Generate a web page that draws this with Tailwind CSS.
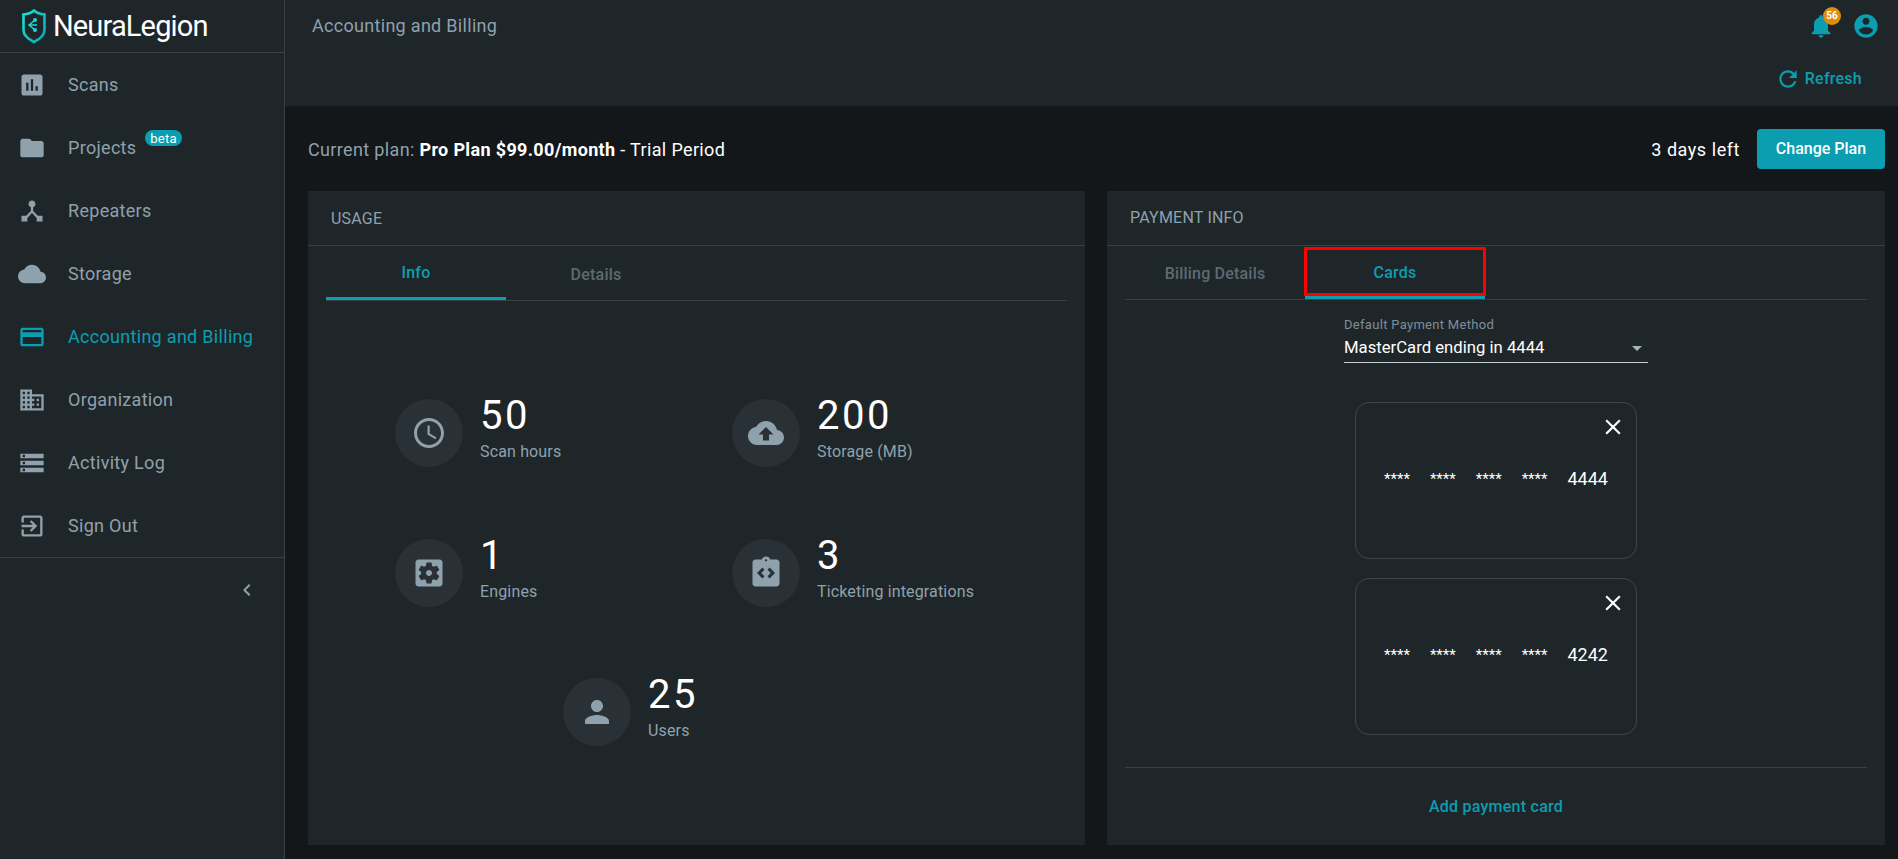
<!DOCTYPE html>
<html lang="en"><head><meta charset="utf-8"><title>Accounting and Billing</title>
<script src="https://cdn.jsdelivr.net/npm/@tailwindcss/browser@4"></script></head>
<body class="m-0 h-[859px] w-[1898px] overflow-hidden bg-[#13171a] font-['Roboto',sans-serif] text-[#8fa1ac]">
<div class="flex h-[859px]">
<aside class="h-full w-[285px] shrink-0 border-r border-[#3a4044] bg-[#1f262a]">
  <div class="flex h-[53px] items-center gap-[7px] border-b border-[#3a4044] pl-[22px]">
    <svg width="24" height="35" viewBox="0 0 24 35" fill="none"><defs><linearGradient id="lg" x1="0" y1="0" x2="1" y2="1"><stop offset="0" stop-color="#19e3d5"/><stop offset="1" stop-color="#0ba6b5"/></linearGradient></defs><path d="M1.5 5.5Q8 5 12 1.5Q16 5 22.5 5.5V21C22.5 27 17 30.5 12 33C7 30.5 1.5 27 1.5 21Z" stroke="url(#lg)" stroke-width="2.6"/><path d="M13 11 7 16l6 5M7 16h8" stroke="#19d8d0" stroke-width="1.5"/><circle cx="13" cy="11" r="2" fill="#19d8d0"/><circle cx="13" cy="21" r="2" fill="#19d8d0"/></svg>
    <span class="text-[29px] leading-none tracking-[-0.85px] text-white">NeuraLegion</span>
  </div>
  <nav>
    <a class="flex h-[63px] items-center pl-[18px] text-[18px] tracking-[0.3px]"><svg class="mr-[22px] size-7" viewBox="0 0 24 24" fill="#8fa1ac"><path d="M19 3H5c-1.1 0-2 .9-2 2v14c0 1.1.9 2 2 2h14c1.1 0 2-.9 2-2V5c0-1.1-.9-2-2-2zM9 17H7v-7h2v7zm4 0h-2V7h2v10zm4 0h-2v-4h2v4z"/></svg>Scans</a>
    <a class="relative flex h-[63px] items-center pl-[18px] text-[18px] tracking-[0.3px]"><svg class="mr-[22px] size-7" viewBox="0 0 24 24" fill="#8fa1ac"><path d="M10 4H4c-1.1 0-1.99.9-1.99 2L2 18c0 1.1.9 2 2 2h16c1.1 0 2-.9 2-2V8c0-1.1-.9-2-2-2h-8l-2-2z"/></svg>Projects<span class="absolute left-[145px] top-[14px] flex h-4 w-[37px] items-center justify-center rounded-full bg-[#0a9eb0] text-[13px] leading-none text-white">beta</span></a>
    <a class="flex h-[63px] items-center pl-[18px] text-[18px] tracking-[0.3px]"><svg class="mr-[22px] size-7" viewBox="0 0 24 24" fill="#8fa1ac"><path d="M17 16l-4-4V8.82C14.16 8.4 15 7.3 15 6c0-1.66-1.34-3-3-3S9 4.34 9 6c0 1.3.84 2.4 2 2.82V12l-4 4H3v5h5v-3.05l4-4.2 4 4.2V21h5v-5h-4z"/></svg>Repeaters</a>
    <a class="flex h-[63px] items-center pl-[18px] text-[18px] tracking-[0.3px]"><svg class="mr-[22px] size-7" viewBox="0 0 24 24" fill="#8fa1ac"><path d="M19.35 10.04C18.67 6.59 15.64 4 12 4 9.11 4 6.6 5.64 5.35 8.04 2.34 8.36 0 10.91 0 14c0 3.31 2.69 6 6 6h13c2.76 0 5-2.24 5-5 0-2.64-2.05-4.78-4.65-4.96z"/></svg>Storage</a>
    <a class="flex h-[63px] items-center pl-[18px] text-[18px] tracking-[0.3px] text-[#0a9eb0]"><svg class="mr-[22px] size-7" viewBox="0 0 24 24" fill="#0a9eb0"><path d="M20 4H4c-1.11 0-1.99.89-1.99 2L2 18c0 1.11.89 2 2 2h16c1.11 0 2-.89 2-2V6c0-1.11-.89-2-2-2zm0 14H4v-6h16v6zm0-10H4V6h16v2z"/></svg>Accounting and Billing</a>
    <a class="flex h-[63px] items-center pl-[18px] text-[18px] tracking-[0.3px]"><svg class="mr-[22px] size-7" viewBox="0 0 24 24" fill="#8fa1ac"><path d="M12 7V3H2v18h20V7H12zM6 19H4v-2h2v2zm0-4H4v-2h2v2zm0-4H4V9h2v2zm0-4H4V5h2v2zm4 12H8v-2h2v2zm0-4H8v-2h2v2zm0-4H8V9h2v2zm0-4H8V5h2v2zm10 12h-8v-2h2v-2h-2v-2h2v-2h-2V9h8v10zm-2-8h-2v2h2v-2zm0 4h-2v2h2v-2z"/></svg>Organization</a>
    <a class="flex h-[63px] items-center pl-[18px] text-[18px] tracking-[0.3px]"><svg class="mr-[22px] size-7" viewBox="0 0 24 24" fill="#8fa1ac"><path d="M2 20h20v-4H2v4zm2-3h2v2H4v-2zM2 4v4h20V4H2zm4 3H4V5h2v2zm-4 7h20v-4H2v4zm2-3h2v2H4v-2z"/></svg>Activity Log</a>
    <a class="flex h-[63px] items-center pl-[18px] text-[18px] tracking-[0.3px]"><svg class="mr-[22px] size-7" viewBox="0 0 24 24" fill="#8fa1ac"><path d="M10.09 15.59L11.5 17l5-5-5-5-1.41 1.41L12.67 11H3v2h9.67l-2.58 2.59zM19 3H5c-1.11 0-2 .9-2 2v4h2V5h14v14H5v-4H3v4c0 1.1.89 2 2 2h14c1.1 0 2-.9 2-2V5c0-1.1-.9-2-2-2z"/></svg>Sign Out</a>
  </nav>
  <div class="flex h-[65px] items-center justify-end border-t border-[#3a4044] pr-[25px]"><svg class="size-[24px]" viewBox="0 0 24 24" fill="#8fa1ac"><path d="M15.41 7.41L14 6l-6 6 6 6 1.41-1.41L10.83 12z"/></svg></div>
</aside>
<main class="flex min-w-0 flex-1 flex-col">
  <header class="flex h-[106px] flex-col bg-[#1f262a]">
    <div class="flex h-[52px] items-start justify-between pr-[18px] pl-[27px]">
      <span class="pt-[15px] text-[18px] leading-[22px] tracking-[0.3px]">Accounting and Billing</span>
      <div class="flex items-center gap-[17px] pt-[12px]">
        <div class="relative"><svg class="size-7" viewBox="0 0 24 24" fill="#0a9eb0"><path d="M12 22c1.1 0 2-.9 2-2h-4c0 1.1.89 2 2 2zm6-6v-5c0-3.07-1.64-5.64-4.5-6.32V4c0-.83-.67-1.5-1.5-1.5s-1.5.67-1.5 1.5v.68C7.63 5.36 6 7.92 6 11v5l-2 2v1h16v-1l-2-2z"/></svg><span class="absolute left-[16px] top-[-5px] flex size-[18px] items-center justify-center rounded-full bg-[#e08c0c] text-[10px] font-bold leading-none text-white">56</span></div>
        <svg class="size-7" viewBox="0 0 24 24" fill="#0a9eb0"><path d="M12 2C6.48 2 2 6.48 2 12s4.48 10 10 10 10-4.48 10-10S17.52 2 12 2zm0 3c1.66 0 3 1.34 3 3s-1.34 3-3 3-3-1.34-3-3 1.34-3 3-3zm0 14.2c-2.5 0-4.71-1.28-6-3.22.03-1.99 4-3.08 6-3.08 1.99 0 5.97 1.09 6 3.08-1.29 1.94-3.5 3.22-6 3.22z"/></svg>
      </div>
    </div>
    <div class="flex items-center justify-end gap-[4px] pt-[14px] pr-[36px] text-[16px] font-medium tracking-[0.25px] text-[#0a9eb0]"><svg class="size-[26px]" viewBox="0 0 24 24" fill="#0a9eb0"><path d="M17.65 6.35C16.2 4.9 14.21 4 12 4c-4.42 0-7.99 3.58-7.99 8s3.57 8 7.99 8c3.73 0 6.84-2.55 7.73-6h-2.08c-.82 2.33-3.04 4-5.65 4-3.31 0-6-2.69-6-6s2.69-6 6-6c1.66 0 3.14.69 4.22 1.78L13 11h7V4l-2.35 2.35z"/></svg>Refresh</div>
  </header>
  <div class="flex h-[85px] items-center justify-between pt-[1px] pr-[13px] pl-[23px]">
    <p class="text-[18px] tracking-[0.35px]">Current plan: <b class="font-bold text-white">Pro Plan $99.00/month</b> <span class="text-white">- Trial Period</span></p>
    <div class="flex items-center gap-[17px]"><span class="text-[18px] tracking-[0.55px] text-white">3 days left</span><button class="h-10 w-[128px] rounded-[4px] bg-[#0a9eb0] text-[16px] font-medium text-white">Change Plan</button></div>
  </div>
  <div class="flex h-[654px] gap-[22px] pr-[13px] pl-[23px]">
    <section class="w-[777px] bg-[#1f262a] px-[18px]">
      <h2 class="-mx-[18px] flex h-[55px] items-center border-b border-[#3a4044] px-[23px] pt-[1px] text-[16px] font-normal tracking-[0.2px]">USAGE</h2>
      <div class="flex h-[55px] border-b border-[#3a4044] text-[16px] tracking-[0.2px]">
        <div class="flex w-[180px] items-center justify-center border-b-[3px] border-[#0a9eb0] pt-[3px] font-medium text-[#0a9eb0]">Info</div>
        <div class="flex w-[180px] items-center justify-center pt-[3px] font-medium text-[#5d6a72]">Details</div>
      </div>
      <div class="ml-[69px] flex w-[672px] flex-wrap justify-center gap-y-[71.5px] pt-[98px]">
        <div class="flex h-[68px] w-[336px] gap-[17px]"><div class="flex size-[68px] items-center justify-center rounded-full bg-[#293136]"><svg class="size-9" viewBox="0 0 24 24" fill="#8fa1ac"><path d="M11.99 2C6.47 2 2 6.48 2 12s4.47 10 9.99 10C17.52 22 22 17.52 22 12S17.52 2 11.99 2zM12 20c-4.42 0-8-3.58-8-8s3.58-8 8-8 8 3.58 8 8-3.58 8-8 8zm.5-13H11v6l5.25 3.15.75-1.23-4.5-2.67z"/></svg></div><div class="-mt-[3px]"><div class="h-[46px] text-[40px] leading-[40px] tracking-[2.5px] text-white">50</div><div class="text-[16px] leading-5 tracking-[0.15px]">Scan hours</div></div></div>
        <div class="flex h-[68px] w-[336px] gap-[17px] pl-px"><div class="flex size-[68px] items-center justify-center rounded-full bg-[#293136]"><svg class="size-9" viewBox="0 0 24 24" fill="#8fa1ac"><path d="M19.35 10.04C18.67 6.59 15.64 4 12 4 9.11 4 6.6 5.64 5.35 8.04 2.34 8.36 0 10.91 0 14c0 3.31 2.69 6 6 6h13c2.76 0 5-2.24 5-5 0-2.64-2.05-4.78-4.65-4.96zM14 13v4h-4v-4H7l5-5 5 5h-3z"/></svg></div><div class="-mt-[3px]"><div class="h-[46px] text-[40px] leading-[40px] tracking-[2.5px] text-white">200</div><div class="text-[16px] leading-5 tracking-[0.15px]">Storage (MB)</div></div></div>
        <div class="flex h-[68px] w-[336px] gap-[17px]"><div class="flex size-[68px] items-center justify-center rounded-full bg-[#293136]"><svg class="size-9" viewBox="0 0 24 24" fill="#8fa1ac"><path d="M12 10c-1.1 0-2 .9-2 2s.9 2 2 2 2-.9 2-2-.9-2-2-2zm7-7H5c-1.11 0-2 .9-2 2v14c0 1.1.89 2 2 2h14c1.11 0 2-.9 2-2V5c0-1.1-.89-2-2-2zm-1.75 9c0 .23-.02.46-.05.68l1.48 1.16c.13.11.17.3.08.45l-1.4 2.42c-.09.15-.27.21-.43.15l-1.74-.7c-.36.28-.76.51-1.18.69l-.26 1.85c-.03.17-.18.3-.35.3h-2.8c-.17 0-.32-.13-.35-.29l-.26-1.85c-.43-.18-.82-.41-1.18-.69l-1.74.7c-.16.06-.34 0-.43-.15l-1.4-2.42c-.09-.15-.05-.34.08-.45l1.48-1.16c-.03-.23-.05-.46-.05-.69 0-.23.02-.46.05-.68l-1.48-1.16c-.13-.11-.17-.3-.08-.45l1.4-2.42c.09-.15.27-.21.43-.15l1.74.7c.36-.28.76-.51 1.18-.69l.26-1.85c.03-.17.18-.3.35-.3h2.8c.17 0 .32.13.35.29l.26 1.85c.43.18.82.41 1.18.69l1.74-.7c.16-.06.34 0 .43.15l1.4 2.42c.09.15.05.34-.08.45l-1.48 1.16c.03.23.05.46.05.69z"/></svg></div><div class="-mt-[3px]"><div class="h-[46px] text-[40px] leading-[40px] tracking-[2.5px] text-white">1</div><div class="text-[16px] leading-5 tracking-[0.15px]">Engines</div></div></div>
        <div class="flex h-[68px] w-[336px] gap-[17px] pl-px"><div class="flex size-[68px] items-center justify-center rounded-full bg-[#293136]"><svg class="size-9" viewBox="0 0 24 24" fill="#8fa1ac"><path d="M19,3h-4.18C14.4,1.84,13.3,1,12,1S9.6,1.84,9.18,3H5C3.9,3,3,3.9,3,5v14c0,1.1,.9,2,2,2h14c1.1,0,2-0.9,2-2V5C21,3.9,20.1,3,19,3z M11,14.17l-1.41,1.42L6,12l3.59-3.59L11,9.83L8.83,12L11,14.17z M12,4.25c-0.41,0-0.75-0.34-0.75-0.75S11.59,2.75,12,2.75s0.75,0.34,0.75,0.75S12.41,4.25,12,4.25z M14.41,15.59L13,14.17L15.17,12L13,9.83l1.41-1.42L18,12L14.41,15.59z"/></svg></div><div class="-mt-[3px]"><div class="h-[46px] text-[40px] leading-[40px] tracking-[2.5px] text-white">3</div><div class="text-[16px] leading-5 tracking-[0.15px]">Ticketing integrations</div></div></div>
        <div class="flex h-[68px] w-[336px] gap-[17px]"><div class="flex size-[68px] items-center justify-center rounded-full bg-[#293136]"><svg class="size-9" viewBox="0 0 24 24" fill="#8fa1ac"><path d="M12 12c2.21 0 4-1.79 4-4s-1.79-4-4-4-4 1.79-4 4 1.79 4 4 4zm0 2c-2.67 0-8 1.34-8 4v2h16v-2c0-2.66-5.33-4-8-4z"/></svg></div><div class="-mt-[3px]"><div class="h-[46px] text-[40px] leading-[40px] tracking-[2.5px] text-white">25</div><div class="text-[16px] leading-5 tracking-[0.15px]">Users</div></div></div>
      </div>
    </section>
    <section class="relative flex w-[778px] flex-col bg-[#1f262a] px-[18px]">
      <h2 class="-mx-[18px] flex h-[55px] items-center border-b border-[#3a4044] px-[23px] pt-[1px] text-[16px] font-normal tracking-[0.2px]">PAYMENT INFO</h2>
      <div class="flex h-[55px] border-b border-[#3a4044] text-[16px] tracking-[0.2px]">
        <div class="flex w-[180px] items-center justify-center pt-[3px] font-medium text-[#5d6a72]">Billing Details</div>
        <div class="relative flex w-[180px] items-center justify-center border-b-[3px] border-[#0a9eb0] pt-[3px] font-medium text-[#0a9eb0]">Cards<span class="absolute inset-x-[-1px] top-[1px] h-[49px] border-[3px] border-[#ff0000]"></span></div>
      </div>
      <div class="mx-auto mt-[17px] w-[304px]">
        <div class="text-[13px] leading-4 tracking-[0.3px] text-[#7f8e98]">Default Payment Method</div>
        <div class="flex h-[30px] items-center justify-between border-b border-[#c8ced2] pr-[6px] text-[16.7px] text-white">MasterCard ending in 4444<span class="mt-[1px] size-0 border-x-[5px] border-t-[5px] border-x-transparent border-t-[#a8b3ba]"></span></div>
      </div>
      <div class="mx-auto mt-[39px] flex w-[282px] flex-col gap-[19px]">
        <div class="relative flex h-[157px] items-start justify-between rounded-[14px] border border-[#3f4548] pt-[65px] pr-[28px] pl-[28px] text-white"><span class="text-[15px]">****</span><span class="text-[15px]">****</span><span class="text-[15px]">****</span><span class="text-[15px]">****</span><span class="text-[18px] leading-[22px]">4444</span><svg class="absolute right-[10px] top-[11px] size-[26px]" viewBox="0 0 24 24" fill="#fff"><path d="M19 6.41L17.59 5 12 10.59 6.41 5 5 6.41 10.59 12 5 17.59 6.41 19 12 13.41 17.59 19 19 17.59 13.41 12z"/></svg></div>
        <div class="relative flex h-[157px] items-start justify-between rounded-[14px] border border-[#3f4548] pt-[65px] pr-[28px] pl-[28px] text-white"><span class="text-[15px]">****</span><span class="text-[15px]">****</span><span class="text-[15px]">****</span><span class="text-[15px]">****</span><span class="text-[18px] leading-[22px]">4242</span><svg class="absolute right-[10px] top-[11px] size-[26px]" viewBox="0 0 24 24" fill="#fff"><path d="M19 6.41L17.59 5 12 10.59 6.41 5 5 6.41 10.59 12 5 17.59 6.41 19 12 13.41 17.59 19 19 17.59 13.41 12z"/></svg></div>
      </div>
      <div class="mt-[32px] flex h-[78px] items-center justify-center border-t border-[#3a4044] text-[16px] font-medium tracking-[0.25px] text-[#0a9eb0]">Add payment card</div>
    </section>
  </div>
</main>
</div>
</body></html>
